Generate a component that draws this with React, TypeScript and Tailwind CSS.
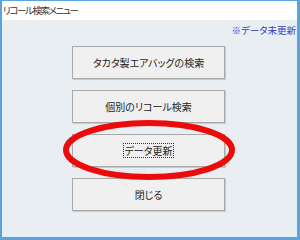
import React from 'react';

const font = { fontFamily: '"Noto Sans CJK JP", "Noto Sans", sans-serif' };

const MenuButton: React.FC<{ label: string; focused?: boolean }> = ({ label, focused }) => (
  <button className="h-[33px] w-[153px] bg-[#f0f0f0] border border-[#a9a9a9] shadow-[1px_1px_0_#c9c9c9] flex items-center justify-center text-[10px] text-[#222] [font-feature-settings:'palt']">
    <span className={focused ? 'border border-dotted border-[#333] px-[1px] leading-[13px]' : 'leading-[13px]'}>{label}</span>
  </button>
);

const App: React.FC = () => {
  return (
    <div className="w-[300px] h-[240px] bg-[#5ba3de] pt-px pl-[2px] pr-[3px] pb-[3px]" style={font}>
      <div className="relative flex flex-col h-full">
        {/* Title bar */}
        <div className="h-[19px] bg-white flex items-center pl-px text-[9.5px] tracking-[-1.4px] text-[#333] leading-none [font-feature-settings:'palt']">
          リコール検索メニュー
        </div>

        {/* Body */}
        <div className="flex-1 bg-[#e8eef2] flex flex-col">
          <div className="flex justify-end pt-[4px] pr-[1px] text-[9.5px] leading-[12px] text-[#3438c4] [font-feature-settings:'palt']">
            ※データ未更新
          </div>
          <div className="flex flex-col gap-[11px] mt-[10px] ml-[70px]">
            <MenuButton label="タカタ製エアバッグの検索" />
            <MenuButton label="個別のリコール検索" />
            <MenuButton label="データ更新" focused />
            <MenuButton label="閉じる" />
          </div>
        </div>

        {/* Red highlight ellipse */}
        <svg className="absolute left-0 top-0 pointer-events-none" width="295" height="236">
          <ellipse cx="147" cy="149" rx="83" ry="27" fill="none" stroke="#ec0b0b" strokeWidth="6" />
        </svg>
      </div>
    </div>
  );
};

export default App;
